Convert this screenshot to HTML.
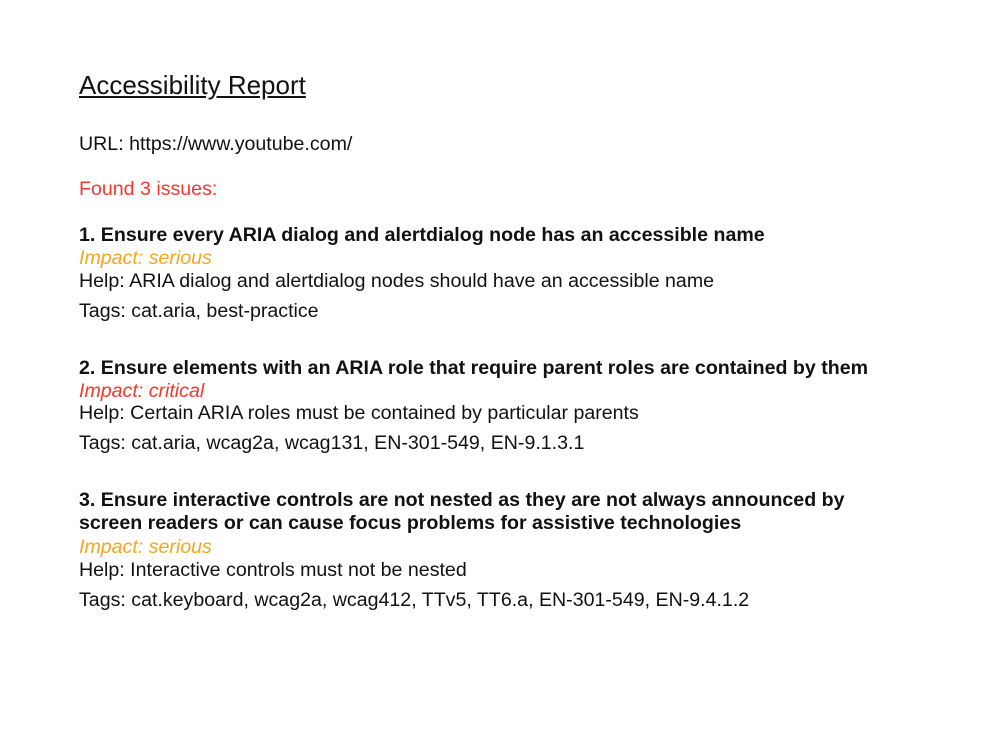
<!DOCTYPE html>
<html><head><style>
body{margin:0;width:988px;height:732px;background:#fff;font-family:"Liberation Sans",Arial,sans-serif;color:#111;position:relative}
div{position:absolute;left:79px;white-space:nowrap;line-height:24px;font-size:19.6px}
.t{font-size:26px;text-decoration:underline;line-height:30px}
.r{color:#f03a2e}
.o{color:#f7a520;font-style:italic}
.h{font-weight:bold}
</style></head><body>
<div class="t" style="top:70px">Accessibility Report</div>
<div style="top:132px">URL: https://www.youtube.com/</div>
<div class="r" style="top:177px">Found 3 issues:</div>
<div class="h" style="top:223px">1. Ensure every ARIA dialog and alertdialog node has an accessible name</div>
<div class="o" style="top:246px">Impact: serious</div>
<div style="top:269px">Help: ARIA dialog and alertdialog nodes should have an accessible name</div>
<div style="top:299px">Tags: cat.aria, best-practice</div>
<div class="h" style="top:356px">2. Ensure elements with an ARIA role that require parent roles are contained by them</div>
<div class="o" style="top:379px;color:#f03a2e">Impact: critical</div>
<div style="top:401px">Help: Certain ARIA roles must be contained by particular parents</div>
<div style="top:431px">Tags: cat.aria, wcag2a, wcag131, EN-301-549, EN-9.1.3.1</div>
<div class="h" style="top:488px">3. Ensure interactive controls are not nested as they are not always announced by</div>
<div class="h" style="top:511px">screen readers or can cause focus problems for assistive technologies</div>
<div class="o" style="top:535px">Impact: serious</div>
<div style="top:558px">Help: Interactive controls must not be nested</div>
<div style="top:588px">Tags: cat.keyboard, wcag2a, wcag412, TTv5, TT6.a, EN-301-549, EN-9.4.1.2</div>
</body></html>
